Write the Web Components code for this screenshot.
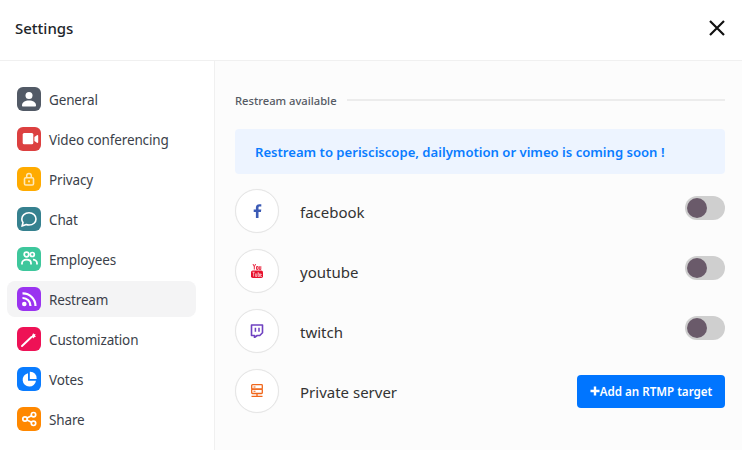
<!DOCTYPE html>
<html>
<head>
<meta charset="utf-8">
<style>
  html, body { margin: 0; height: 100%; }
  body { font-family: "Noto Sans", "Open Sans", sans-serif; overflow: hidden; background: #fff; }
</style>
</head>
<body>
<settings-dialog>
  <side-item slot="nav" label="General" color="#525a66" icon="user"></side-item>
  <side-item slot="nav" label="Video conferencing" color="#dc4040" icon="video"></side-item>
  <side-item slot="nav" label="Privacy" color="#ffab00" icon="lock"></side-item>
  <side-item slot="nav" label="Chat" color="#36818f" icon="chat"></side-item>
  <side-item slot="nav" label="Employees" color="#3ec79c" icon="people"></side-item>
  <side-item slot="nav" label="Restream" color="#9a33f0" icon="rss" active></side-item>
  <side-item slot="nav" label="Customization" color="#ee1256" icon="wand"></side-item>
  <side-item slot="nav" label="Votes" color="#0a7cff" icon="pie"></side-item>
  <side-item slot="nav" label="Share" color="#ff8800" icon="share"></side-item>

  <section-title>Restream available</section-title>
  <info-banner>Restream to perisciscope, dailymotion or vimeo is coming soon !</info-banner>
  <stream-row label="facebook" icon="facebook"><toggle-switch></toggle-switch></stream-row>
  <stream-row label="youtube" icon="youtube"><toggle-switch></toggle-switch></stream-row>
  <stream-row label="twitch" icon="twitch"><toggle-switch></toggle-switch></stream-row>
  <stream-row label="Private server" icon="server"><add-button>Add an RTMP target</add-button></stream-row>
</settings-dialog>

<script>
'use strict';

const ICONS = {
  user: '<circle cx="12" cy="8.500" r="3.500" fill="#fff"/><path d="M5 18.500c0-3.500 3-5 7-5s7 1.500 7 5c0 .6-.4 1-1 1H6c-.6 0-1-.4-1-1z" fill="#fff"/>',
  video: '<rect x="5.700" y="6" width="10.600" height="11.300" rx="1.500" fill="#fff"/><path d="M17.700 10l2.500-1.800c.6-.4 1.300 0 1.300.6v6.400c0 .6-.7 1-1.300.6l-2.500-1.800z" fill="#fff" transform="translate(-.3 0)"/>',
  lock: '<path d="M9.700 10.500V8.700a2.300 2.300 0 0 1 4.600 0v1.800" fill="none" stroke="#ffe9b8" stroke-width="1.500"/><rect x="7.500" y="10.800" width="9" height="7.200" rx="1.300" fill="none" stroke="#ffe9b8" stroke-width="1.600"/><rect x="11" y="13.200" width="2" height="2.400" rx="1" fill="#ffe9b8"/>',
  chat: '<path d="M12 5.800c4.200 0 7 2.700 7 6.100S16.200 18 12 18c-1 0-1.900-.2-2.700-.5l-4.300 1.600 1-3.500c-.8-1-1.200-2.300-1.200-3.700 0-3.400 3-6.100 7.200-6.100z" fill="none" stroke="#fff" stroke-width="1.600" stroke-linejoin="round"/>',
  people: '<circle cx="9.500" cy="7.500" r="2.300" fill="none" stroke="#fff" stroke-width="1.700"/><circle cx="15.300" cy="7.500" r="2" fill="none" stroke="#fff" stroke-width="1.700"/><path d="M5 17.500v-1.300c0-2.200 2-3.500 4.500-3.500s4.500 1.300 4.500 3.500v1.300M16 12.700c2 0 4 1.300 4 3.500v1.300" fill="none" stroke="#fff" stroke-width="1.800"/>',
  rss: '<circle cx="7.300" cy="17" r="2.300" fill="#fff"/><path d="M5.500 11a7.800 7.800 0 0 1 8 8M5.500 6.300a12.700 12.700 0 0 1 13 12.700" fill="none" stroke="#fff" stroke-width="2.200"/>',
  wand: '<path d="M5 19l9.500-9" stroke="#fff" stroke-width="1.900" stroke-linecap="round"/><path d="M16.200 6l.7 1.300 1.600-.2-.5 1.500 1 1.200-1.600.3-.5 1.400-1.200-1.100-1.500-.3.800-1.300z" fill="#fff"/>',
  pie: '<path d="M11 6.300a6.700 6.700 0 1 0 8 7.500h-8z" fill="#fff"/><path d="M12.800 4.700a6.500 6.500 0 0 1 6.900 7.300h-6.900z" fill="#fff"/>',
  share: '<path d="M8 12l8-4M8 12l8 4" stroke="#fff" stroke-width="1.700"/><circle cx="8" cy="12" r="2.200" fill="#ff8800" stroke="#fff" stroke-width="1.700"/><circle cx="16.500" cy="7.700" r="2.200" fill="#ff8800" stroke="#fff" stroke-width="1.700"/><circle cx="16.500" cy="16.300" r="2.200" fill="#ff8800" stroke="#fff" stroke-width="1.700"/>',
  facebook: '<path d="M5 14V8H7.400L7.800 5.400H5V3.900c0-.8.300-1.300 1.300-1.300h1.500V.3C7.500.2 6.700.2 5.900.2 3.800.2 2.400 1.400 2.400 3.600v1.800H.2V8h2.200v6z" fill="#3b5ab5" transform="translate(3.500 0)"/>',
  youtube: '<rect x="1" y="6.500" width="12" height="7.500" rx="1.800" fill="#e8112d"/><path d="M3 0l1.300 2.700V5.500M5.600 0L4.300 2.700M6.500 2.600h1.600v2.800H6.500zM9.300 2.200v3.300h1.500V2.200" fill="none" stroke="#e8112d" stroke-width=".9"/><path d="M2.400 8.200h2.400M3.600 8.200v4.300M5.600 9.500v3h1.200v-3M8.200 8v4.500h1.300V9.800H8.200M10.600 10.500h1.200M10.600 9.500v3h1.300" fill="none" stroke="#fff" stroke-width=".6"/>',
  twitch: '<path d="M1.500 1h11v7.800L9.800 11.500H7.200L4.500 13.500v-2H1.500z" fill="none" stroke="#6f42c1" stroke-width="1.600" stroke-linejoin="round"/><path d="M5.400 3.700v4M9 3.700v4" stroke="#6f42c1" stroke-width="1.500"/>',
  server: '<rect x="1.700" y=".7" width="10.600" height="4.400" rx=".8" fill="none" stroke="#f0661a" stroke-width="1.300"/><rect x="1.700" y="5.100" width="10.600" height="4.400" rx=".8" fill="none" stroke="#f0661a" stroke-width="1.300"/><path d="M7 9.500v2.500M1.500 12.300h11" stroke="#f0661a" stroke-width="1.300"/><path d="M3.500 3h2M3.500 7.300h2" stroke="#f0661a" stroke-width="1.100"/>'
};

function define(name, css, html, setup) {
  customElements.define(name, class extends HTMLElement {
    constructor() {
      super();
      const root = this.attachShadow({mode: 'open'});
      root.innerHTML = `<style>${css}</style>${html}`;
      if (setup) setup.call(this, root);
    }
  });
}

define('settings-dialog', `
  :host { display: flex; flex-direction: column; height: 450px; color: #212529; }
  header { display: flex; align-items: center; justify-content: space-between; height: 60px; flex: none;
    padding: 0 17px 5px 15px; box-sizing: border-box; }
  h1 { margin: 0; font-size: 15px; font-weight: 500; color: #212529; }
  svg { display: block; }
  .rule { height: 1px; background: #f0f0f0; flex: none; }
  .body { display: flex; flex: 1; min-height: 0; }
  nav { flex: none; box-sizing: border-box; border-right: 1px solid #f0f0f0; width: 215px;
    padding: 20px 18px 0 7px; display: flex; flex-direction: column; gap: 4px; }
  main { flex: 1; background: #fcfcfc; padding: 27px 17px 0 20px; min-width: 0; }
`, `
  <header>
    <h1>Settings</h1>
    <svg width="16" height="16" viewBox="0 0 16 16"><path d="M1 1l14 14M15 1L1 15" stroke="#111" stroke-width="2.200"/></svg>
  </header>
  <div class="rule"></div>
  <div class="body">
    <nav><slot name="nav"></slot></nav>
    <main><slot></slot></main>
  </div>
`);

define('side-item', `
  :host { display: flex; align-items: center; gap: 8px; height: 36px; padding-left: 10px; border-radius: 8px;
    font-size: 13.5px; letter-spacing: -.15px; color: #3b3f4a; }
  :host([active]) { background: #f4f4f5; }
  .ic { width: 24px; height: 24px; border-radius: 6px; flex: none; }
  span { padding-top: 2px; }
  svg { display: block; }
`, `<div class="ic"><svg width="24" height="24" viewBox="0 0 24 24"></svg></div><span></span>`, function(root) {
  queueMicrotask(() => {
    root.querySelector('span').textContent = this.getAttribute('label');
    root.querySelector('.ic').style.background = this.getAttribute('color');
    root.querySelector('svg').innerHTML = ICONS[this.getAttribute('icon')];
  });
});

define('section-title', `
  :host { display: flex; align-items: center; gap: 10px; height: 24px; font-size: 11.200px; font-weight: 500; color: #555a63; }
  i { flex: 1; height: 2px; background: #ececec; }
`, `<span><slot></slot></span><i></i>`);

define('info-banner', `
  :host { display: flex; align-items: center; height: 45px; margin-top: 17px; margin-bottom: -1px; padding-left: 20px; border-radius: 4px;
    background: #edf4ff; color: #0a7cff; font-size: 13.100px; font-weight: 600; }
`, `<slot></slot>`);

define('stream-row', `
  :host { display: flex; align-items: center; height: 44px; margin-top: 16px; font-size: 15px; color: #333; }
  .circle { width: 44px; height: 44px; box-sizing: border-box; border-radius: 50%; background: #fff;
    border: 1px solid #e6e6e6; box-shadow: 0 0 1px rgba(0,0,0,.08); display: flex; align-items: center; justify-content: center; margin-right: 21px; flex: none; }
  span { flex: 1; padding-top: 2px; }
  svg { display: block; }
`, `<div class="circle"><svg width="14" height="14" viewBox="0 0 14 14"></svg></div><span></span><slot></slot>`, function(root) {
  queueMicrotask(() => {
    root.querySelector('span').textContent = this.getAttribute('label');
    root.querySelector('svg').innerHTML = ICONS[this.getAttribute('icon')];
  });
});

define('toggle-switch', `
  :host { display: block; width: 40px; height: 24px; margin-bottom: 6px; border-radius: 12px; background: #cfcfcf; position: relative; }
  i { position: absolute; left: 2px; top: 2px; width: 20px; height: 20px; border-radius: 50%; background: #6a5a6a; }
`, `<i></i>`);

define('add-button', `
  :host { display: flex; align-items: center; justify-content: center; width: 148px; height: 33px; border-radius: 4px;
    background: #0075ff; color: #fff; font-size: 11.600px; font-weight: 600; }
  svg { display: block; }
`, `<svg width="10" height="10" viewBox="0 0 10 10"><path d="M5 .5v9M.5 5h9" stroke="#fff" stroke-width="2.400"/></svg><slot></slot>`);
</script>
</body>
</html>
